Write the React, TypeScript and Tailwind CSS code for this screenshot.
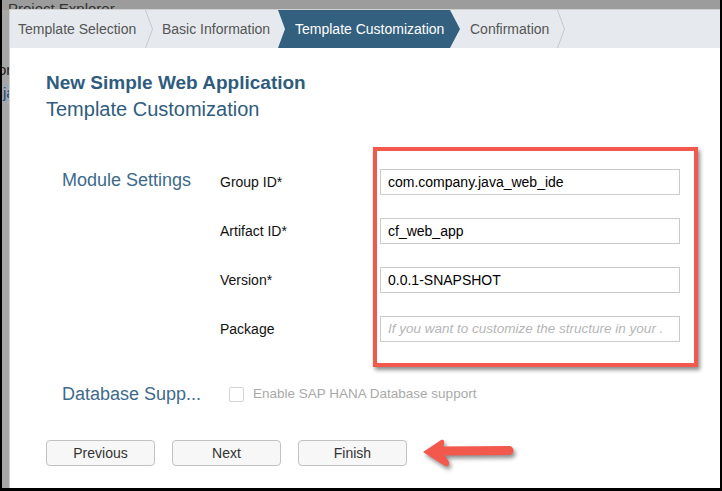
import React from 'react'

const font = { fontFamily: '"Liberation Sans", Arial, sans-serif' }

function Chevron() {
  return (
    <svg width="9" height="38" viewBox="0 0 9 38" className="shrink-0">
      <polyline points="0.5,0 7.5,19 0.5,38" fill="none" stroke="#c3c9cf" strokeWidth="1" />
    </svg>
  )
}

function Field(props: { value?: string; placeholder?: string }) {
  return (
    <div className="h-[26px] w-[300px] border border-[#cbcbcb] bg-white flex items-center pl-[7px] pr-[4px] overflow-hidden whitespace-nowrap">
      {props.value ? (
        <span className="text-[14px] text-black">{props.value}</span>
      ) : (
        <span className="text-[13.5px] italic text-[#b5b5b5]">{props.placeholder}</span>
      )}
    </div>
  )
}

function Btn(props: { label: string }) {
  return (
    <button className="h-[26px] w-[109px] rounded-[4px] border border-[#c2c2c2] bg-[#f7f7f7] text-[14px] text-[#333]">
      {props.label}
    </button>
  )
}

export default function App() {
  const rows = [
    { label: 'Group ID*', value: 'com.company.java_web_ide' },
    { label: 'Artifact ID*', value: 'cf_web_app' },
    { label: 'Version*', value: '0.0.1-SNAPSHOT' },
    { label: 'Package', placeholder: 'If you want to customize the structure in your .' },
  ]

  return (
    <div style={font} className="w-[722px] h-[491px] bg-black pl-[2px] pr-[2px] pb-[3px]">
      <div className="relative w-full h-full bg-[#a6a6a6] overflow-hidden">
        {/* IDE behind the dialog */}
        <div className="h-[10px] bg-[#9c9c9c] pl-[6px] text-[15px] leading-[18px] text-[#333] whitespace-nowrap">
          Project Explorer
        </div>
        <div className="pt-[51px] text-[15px] leading-[18px] text-[#222] whitespace-nowrap">
          <div className="-ml-[4px]">or</div>
          <div className="mt-[5px] pl-[1px] bg-[#9fa7b2] text-[#23476b]">ja</div>
        </div>

        {/* Wizard dialog */}
        <div className="absolute left-[7px] top-[9px] right-0 bottom-0 bg-white border-t border-l border-[#cfcfcf]">
          <div className="flex h-[38px] bg-[#e6eaee] text-[14px] text-[#555] whitespace-nowrap">
            <div className="w-[135px] pl-[8px] flex items-center">Template Selection</div>
            <Chevron />
            <div className="w-[124px] pl-[8px] flex items-center">Basic Information</div>
            <div className="w-[182px] pl-[17px] flex items-center bg-[#34607f] text-white [clip-path:polygon(0_0,calc(100%_-_10px)_0,100%_50%,calc(100%_-_10px)_100%,0_100%,7px_50%)]">
              Template Customization
            </div>
            <div className="w-[97px] pl-[10px] flex items-center">Confirmation</div>
            <Chevron />
          </div>

          <div className="pl-[36px] pt-[23px]">
            <div className="text-[19px] leading-[24px] font-bold text-[#2f5c7e]">New Simple Web Application</div>
            <div className="mt-[2px] text-[20px] leading-[24px] text-[#2f5c7e]">Template Customization</div>

            <div className="mt-[48px] pl-[16px] grid grid-cols-[158px_160px_300px] gap-y-[23px] items-center">
              {rows.map((r, i) => (
                <React.Fragment key={r.label}>
                  <div className="h-[26px] flex items-center pb-[3px] text-[18px] text-[#3d6a8c] whitespace-nowrap">
                    {i === 0 ? 'Module Settings' : ''}
                  </div>
                  <div className="text-[14px] text-[#111]">{r.label}</div>
                  <Field value={r.value} placeholder={r.placeholder} />
                </React.Fragment>
              ))}
            </div>

            <div className="mt-[39px] pl-[16px] h-[26px] flex items-center">
              <div className="w-[158px] text-[18px] text-[#3d6a8c] whitespace-nowrap">Database Supp...</div>
              <div className="ml-[9px] w-[15px] h-[15px] border border-[#d3d3d3] rounded-[2px] bg-white" />
              <div className="ml-[9px] text-[13.5px] text-[#a9a9a9]">Enable SAP HANA Database support</div>
            </div>

            <div className="mt-[33px] flex gap-[17px]">
              <Btn label="Previous" />
              <Btn label="Next" />
              <Btn label="Finish" />
            </div>
          </div>

          {/* annotations */}
          <div className="absolute left-[363px] top-[137px] w-[325px] h-[220px] border-[4px] border-[#f2584c] shadow-[2px_3px_4px_rgba(0,0,0,0.45)]" />
          <svg
            className="absolute left-[410px] top-[426px] drop-shadow-[2px_3px_2px_rgba(0,0,0,0.45)]"
            width="100"
            height="40"
            viewBox="0 0 100 40"
          >
            <line x1="22" y1="15" x2="89" y2="14.5" stroke="#f2584c" strokeWidth="9" strokeLinecap="round" />
            <path d="M3,16 L21,4 Q25,3 24,8 L22,15 L29,26 Q30,31 25,30 Z" fill="#f2584c" />
          </svg>
        </div>
      </div>
    </div>
  )
}
